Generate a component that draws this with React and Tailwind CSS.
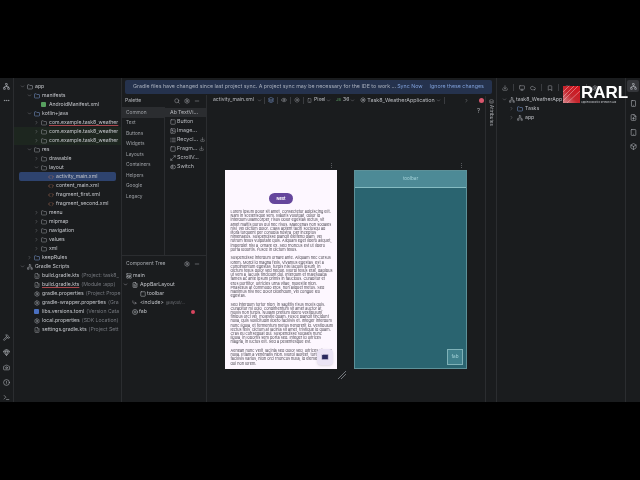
import {
  ChevronDown, ChevronRight, Folder, Search, Settings, Minus, Square, Image, List, Maximize2, ToggleLeft,
  Download, Hammer, Gem, Camera, CircleAlert, Terminal, Network, MoreHorizontal, Box, Eye, Layers,
  Smartphone, FileText, Mail, LayoutPanelTop, CirclePlus, CornerDownRight, RefreshCw, X, Cloud, Bookmark, Tablet,
  Monitor, FilePlus, FileCode, Code, Sun,
} from 'lucide-react';

const tree = [
  { d: 0, t: 'app', open: true, icon: 'box' },
  { d: 1, t: 'manifests', open: true, icon: 'blue' },
  { d: 2, t: 'AndroidManifest.xml', icon: 'manifest' },
  { d: 1, t: 'kotlin+java', open: true, icon: 'blue' },
  { d: 2, t: 'com.example.task8_weather', closed: true, icon: 'pkg', red: true },
  { d: 2, t: 'com.example.task8_weather', closed: true, icon: 'pkg', green: true },
  { d: 2, t: 'com.example.task8_weather', closed: true, icon: 'pkg', green: true },
  { d: 1, t: 'res', open: true, icon: 'pkg' },
  { d: 2, t: 'drawable', closed: true, icon: 'pkg' },
  { d: 2, t: 'layout', open: true, icon: 'pkg' },
  { d: 3, t: 'activity_main.xml', icon: 'xml', selected: true },
  { d: 3, t: 'content_main.xml', icon: 'xml' },
  { d: 3, t: 'fragment_first.xml', icon: 'xml' },
  { d: 3, t: 'fragment_second.xml', icon: 'xml' },
  { d: 2, t: 'menu', closed: true, icon: 'pkg' },
  { d: 2, t: 'mipmap', closed: true, icon: 'pkg' },
  { d: 2, t: 'navigation', closed: true, icon: 'pkg' },
  { d: 2, t: 'values', closed: true, icon: 'pkg' },
  { d: 2, t: 'xml', closed: true, icon: 'pkg' },
  { d: 1, t: 'keepRules', closed: true, icon: 'blue' },
  { d: 0, t: 'Gradle Scripts', open: true, icon: 'gradle' },
  { d: 1, t: 'build.gradle.kts', note: '(Project: task8_', icon: 'kts' },
  { d: 1, t: 'build.gradle.kts', note: '(Module :app)', icon: 'kts', red: true },
  { d: 1, t: 'gradle.properties', note: '(Project Prope', icon: 'gear' },
  { d: 1, t: 'gradle-wrapper.properties', note: '(Gra', icon: 'gear' },
  { d: 1, t: 'libs.versions.toml', note: '(Version Cata', icon: 'toml' },
  { d: 1, t: 'local.properties', note: '(SDK Location)', icon: 'gear' },
  { d: 1, t: 'settings.gradle.kts', note: '(Project Sett', icon: 'kts' },
];

function TreeIcon({ kind }) {
  if (kind === 'blue') return <Folder size={6} className="text-[#7f9fd8]" />;
  if (kind === 'pkg') return <Folder size={6} className="text-[#9a9da3]" />;
  if (kind === 'box') return <Folder size={6} className="text-[#a9adb5]" />;
  if (kind === 'manifest') return <span className="w-[5px] h-[5px] rounded-[1px] bg-[#57a05f]" />;
  if (kind === 'xml') return <Code size={6} className="text-[#c47a5c]" />;
  if (kind === 'gradle') return <Network size={6} className="text-[#9a9da3]" />;
  if (kind === 'kts') return <FileCode size={6} className="text-[#9a9da3]" />;
  if (kind === 'gear') return <Settings size={6} className="text-[#a5a8ae]" />;
  return <span className="w-[5px] h-[5px] rounded-[1px] bg-[#4a6fc0]" />;
}

function TreeRow({ row }) {
  const pad = { 0: 'pl-[5px]', 1: 'pl-[12px]', 2: 'pl-[19px]', 3: 'pl-[21px] ml-[5px] mr-[5px]' }[row.d];
  const bg = row.selected ? 'bg-[#2e436e] rounded-[2px]' : row.green ? 'bg-[#1d261f]' : '';
  return (
    <div className={`h-[9px] flex items-center whitespace-nowrap overflow-hidden ${pad} ${bg}`}>
      <span className="w-[7px] flex justify-center shrink-0 text-[#8c8f94]">
        {row.open && <ChevronDown size={5} />}
        {row.closed && <ChevronRight size={5} />}
      </span>
      <span className="w-[7px] flex justify-center shrink-0 mr-[2px]">
        <TreeIcon kind={row.icon} />
      </span>
      <span className={`text-[#c3c5ca] ${row.red ? 'underline decoration-[#a8484d]' : ''}`}>{row.t}</span>
      {row.note && <span className="ml-[2px] text-[#74777d]">{row.note}</span>}
    </div>
  );
}

const categories = ['Common', 'Text', 'Buttons', 'Widgets', 'Layouts', 'Containers', 'Helpers', 'Google', 'Legacy'];

const paletteItems = [
  { t: 'TextVi...', prefix: 'Ab', selected: true },
  { t: 'Button', Icon: Square },
  { t: 'Image...', Icon: Image },
  { t: 'Recycl...', Icon: List, dl: true },
  { t: 'Fragm...', Icon: Square, dl: true },
  { t: 'ScrollV...', Icon: Maximize2 },
  { t: 'Switch', Icon: ToggleLeft },
];

const lorem = [
  'Lorem ipsum dolor sit amet, consectetur adipiscing elit. Nam in scelerisque sem. Mauris volutpat, dolor id interdum ullamcorper, risus dolor egestas lectus, sit amet mattis purus dui nec risus. Maecenas non sodales nisi, vel dictum dolor. Class aptent taciti sociosqu ad litora torquent per conubia nostra, per inceptos himenaeos. Suspendisse blandit eleifend diam, vel rutrum tellus vulputate quis. Aliquam eget libero aliquet, imperdiet nisl a, ornare ex. Sed rhoncus est ut libero porta lobortis. Fusce in dictum tellus.',
  'Suspendisse interdum ornare ante. Aliquam nec cursus lorem. Morbi id magna felis. Vivamus egestas, est a condimentum egestas, turpis nisl iaculis ipsum, in dictum tellus dolor sed neque. Morbi tellus erat, dapibus ut sem a, iaculis tincidunt dui. Interdum et malesuada fames ac ante ipsum primis in faucibus. Curabitur et eros porttitor, ultricies urna vitae, molestie nibh. Phasellus at commodo eros, non aliquet metus. Sed maximus nisl nec dolor bibendum, vel congue leo egestas.',
  'Sed interdum tortor nibh, in sagittis risus mollis quis. Curabitur mi odio, condimentum sit amet auctor at, mollis non turpis. Nullam pretium libero vestibulum, finibus orci vel, molestie quam. Fusce blandit tincidunt nulla, quis sollicitudin libero facilisis et. Integer interdum nunc ligula, et fermentum metus hendrerit id. Vestibulum lectus felis, dictum at lacinia sit amet, tristique id quam. Cras eu consequat dui. Suspendisse sodales nunc ligula, in lobortis sem porta sed. Integer id ultrices magna, in luctus elit. Sed a pellentesque est.',
  'Aenean nunc velit, lacinia sed dolor sed, ultrices viverra nulla. Etiam a venenatis nibh. Morbi laoreet, tortor sed facilisis varius, nibh orci rhoncus nulla, id elementum leo dui non lorem.',
];

function Palette() {
  return (
    <div className="w-[85px] shrink-0 border-r border-[#2b2d30] flex flex-col text-[5px] text-[#b4b7bc]">
      <div className="h-[13px] flex items-center justify-between pl-[3px] pr-[6px] mt-[-1px]">
        <span>Palette</span>
        <span className="flex gap-[4px] text-[#a0a3a8]">
          <Search size={6} />
          <Settings size={6} />
          <Minus size={6} />
        </span>
      </div>
      <div className="h-[149px] flex border-b border-[#2b2d30]">
        <div className="w-[43px] border-r border-[#2b2d30] flex flex-col">
          {categories.map((c, i) => (
            <div key={c} className={`h-[10.5px] flex items-center pl-[3px] text-[4.8px] text-[#9ea1a6] ${i === 0 ? 'bg-[#2b2d30]' : ''}`}>
              <span className="pl-[1px]">{c}</span>
            </div>
          ))}
        </div>
        <div className="flex-1 flex flex-col pt-[1px] text-[5.3px] text-[#b7b9be]">
          {paletteItems.map(({ t, Icon, prefix, selected, dl }) => (
            <div key={t} className={`h-[9px] flex items-center gap-[1px] pl-[5px] whitespace-nowrap ${selected ? 'bg-[#2b2d30]' : ''}`}>
              {prefix && <span>{prefix}</span>}
              {Icon && <Icon size={6} className="text-[#a9abb0]" />}
              <span>{t}</span>
              {dl && <Download size={5} className="ml-[1px] text-[#a0a3a8]" />}
            </div>
          ))}
        </div>
      </div>
      <div className="h-[15px] flex items-center justify-between pl-[4px] pr-[6px] text-[5px] text-[#a4a7ac]">
        <span>Component Tree</span>
        <span className="flex gap-[4px]">
          <Settings size={6} />
          <Minus size={6} />
        </span>
      </div>
      <div className="flex flex-col text-[5.2px] text-[#bfc1c6]">
        <div className="h-[9px] flex items-center gap-[1px] pl-[4px]"><LayoutPanelTop size={6} />main</div>
        <div className="h-[9px] flex items-center pl-[1px]"><ChevronDown size={5} /><span className="w-[4px]" /><FileText size={6} /><span className="ml-[2px]">AppBarLayout</span></div>
        <div className="h-[9px] flex items-center gap-[1px] pl-[18px]"><Square size={6} />toolbar</div>
        <div className="h-[9px] flex items-center gap-[3px] pl-[10px]"><CornerDownRight size={5} />
          <span className="text-[5px]">&lt;include&gt;</span><span className="text-[3.8px] ml-[-1px] text-[#6b6e73]">@layout/...</span>
        </div>
        <div className="h-[9px] flex items-center gap-[1px] pl-[10px]">
          <CirclePlus size={6} />fab
          <span className="ml-[43px] w-[4px] h-[4px] rounded-full bg-[#d9455f]" />
        </div>
      </div>
    </div>
  );
}

function DesignToolbar() {
  return (
    <div className="h-[12px] flex items-center text-[5.1px] text-[#b9bbc0] whitespace-nowrap pl-[6px] mt-[-1px]">
      <span>activity_main.xml</span>
      <ChevronDown size={5} className="ml-[3px] text-[#8c8f94]" />
      <span className="w-px h-[7px] bg-[#3a3c40] ml-[2px]" />
      <Layers size={6} className="ml-[3px] text-[#7f9fd8]" />
      <span className="w-px h-[7px] bg-[#3a3c40] ml-[3px]" />
      <Eye size={6} className="ml-[3px] text-[#9a9da3]" />
      <span className="w-px h-[7px] bg-[#3a3c40] ml-[3px]" />
      <Sun size={6} className="ml-[3px] text-[#9a9da3]" />
      <span className="w-px h-[7px] bg-[#3a3c40] ml-[3px]" />
      <Smartphone size={5} className="ml-[3px] text-[#a0a3a8]" />
      <span className="ml-[2px]">Pixel</span>
      <ChevronDown size={5} className="ml-[1px] text-[#8c8f94]" />
      <span className="ml-[5px] text-[3.8px] text-[#5fa768]">JB</span>
      <span className="ml-[2px]">36</span>
      <ChevronDown size={5} className="ml-[1px] text-[#8c8f94]" />
      <Sun size={6} className="ml-[5px] text-[#c9cbd0]" />
      <span className="ml-[1px] text-[5.4px]">Task8_WeatherApplication</span>
      <ChevronDown size={5} className="ml-[1px] text-[#8c8f94]" />
      <span className="w-px h-[7px] bg-[#3a3c40] ml-[3px]" />
      <ChevronRight size={5} className="ml-[19px] text-[#a0a3a8]" />
      <span className="ml-[10px] w-[5px] h-[5px] rounded-full bg-[#d9566d]" />
    </div>
  );
}

function PhonePreview() {
  return (
    <div className="relative w-[112px] h-[199px] bg-[#fdf7ff] overflow-hidden shrink-0 flex flex-col items-center pt-[23px]">
      <div className="w-[24px] h-[11px] shrink-0 rounded-full bg-[#65469c] text-white text-[4px] font-bold flex items-center justify-center">Next</div>
      <div className="mt-[6px] w-[103px] ml-[2px] flex flex-col gap-[4.3px] text-[3.85px] leading-[4.2px] text-[#4a4650]">
        {lorem.map(p => <p key={p.slice(0, 12)}>{p}</p>)}
      </div>
      <div className="absolute right-[4px] bottom-[4px] w-[16px] h-[16px] rounded-[4px] bg-[#ebe4f5] shadow flex items-center justify-center">
        <Mail size={8} className="text-[#2a2a5e] fill-[#2a2a5e] stroke-[#ebe4f5]" />
      </div>
    </div>
  );
}

function BlueprintPreview() {
  return (
    <div className="w-[113px] h-[199px] bg-[#2a6470] border border-[#5d9199] shrink-0 flex flex-col">
      <div className="h-[17px] bg-[#4d8a96] border-b border-[#86bcc2] flex items-center justify-center text-[4.6px] text-[#a5d3d9]">toolbar</div>
      <div className="flex-1 flex items-end justify-end pr-[3px] pb-[3px]">
        <div className="w-[16px] h-[16px] bg-[#40808c] border border-[#7fb2b8] flex items-center justify-center text-[4.6px] text-[#a5d3d9]">fab</div>
      </div>
    </div>
  );
}

function Attributes() {
  return (
    <div className="w-[11px] shrink-0 border-l border-[#2b2d30] flex flex-col items-center pt-[3px] text-[#a9abb0]">
      <Layers size={5} />
      <span className="mt-[1px] text-[4.6px] [writing-mode:vertical-rl]">Attributes</span>
    </div>
  );
}

function GradlePanel() {
  return (
    <div className="w-[129px] shrink-0 border-l border-[#2b2d30] flex flex-col text-[5.2px] text-[#bcbec3]">
      <div className="h-[15px] mt-[2px] flex items-center gap-[5px] pl-[5px] text-[#a0a3a8]">
        <Download size={6} />
        <span className="w-px h-[7px] bg-[#3a3c40]" />
        <Monitor size={6} />
        <Cloud size={6} />
        <span className="w-px h-[7px] bg-[#3a3c40]" />
        <Bookmark size={6} />
        <span className="w-px h-[7px] bg-[#3a3c40]" />
        <RefreshCw size={6} />
        <X size={6} />
        <span className="w-px h-[7px] bg-[#3a3c40]" />
        <Settings size={6} />
      </div>
      <div className="h-[9px] flex items-center pl-[5px] whitespace-nowrap">
        <ChevronDown size={5} className="text-[#8c8f94]" />
        <Network size={6} className="ml-[2px] text-[#9a9da3]" />
        <span className="ml-[1px]">task8_WeatherApp</span>
      </div>
      <div className="h-[9px] flex items-center pl-[12px]">
        <ChevronRight size={5} className="text-[#8c8f94]" />
        <Folder size={6} className="ml-[3px] text-[#7f9fd8]" />
        <span className="ml-[2px]">Tasks</span>
      </div>
      <div className="h-[9px] flex items-center pl-[12px]">
        <ChevronRight size={5} className="text-[#8c8f94]" />
        <Network size={6} className="ml-[3px] text-[#9a9da3]" />
        <span className="ml-[2px]">app</span>
      </div>
    </div>
  );
}

function RarlLogo() {
  return (
    <div className="absolute left-[563px] top-[86px] flex items-start">
      <svg width="17" height="17" viewBox="0 0 17 17" className="shrink-0">
        <defs>
          <linearGradient id="rarl" x1="0" y1="1" x2="1" y2="0">
            <stop offset="0" stopColor="#d98a90" />
            <stop offset="0.45" stopColor="#c4262e" />
            <stop offset="1" stopColor="#d3121c" />
          </linearGradient>
        </defs>
        <rect width="17" height="17" fill="url(#rarl)" />
        <path d="M0 6 L6 0 M0 11 L11 0 M0 15 L15 0 M4 17 L17 5" stroke="#f0c0c3" strokeWidth="0.5" />
      </svg>
      <div className="flex flex-col ml-[1px] mt-[-2px]">
        <span className="text-[17px] leading-[17px] font-bold text-white font-['Liberation_Sans',sans-serif]">RARL</span>
        <span className="text-[2.4px] leading-[3px] text-[#c9cbd0] whitespace-nowrap">Applied Robotics Research Lab</span>
      </div>
    </div>
  );
}

export default function App() {
  return (
    <div className="relative w-[640px] h-[480px] bg-black overflow-hidden font-['Inter',sans-serif] blur-[0.4px]">
      <div className="h-[78px]" />
      <div className="h-[324px] flex bg-[#1a1c1e]">
        {/* left tool strip */}
        <div className="w-[14px] shrink-0 border-r border-[#2b2d30] flex flex-col items-center pt-[5px] text-[#b0b3b8]">
          <Network size={7} />
          <MoreHorizontal size={7} className="mt-[7px]" />
          <div className="mt-auto flex flex-col items-center gap-[8px] pb-[1px]">
            <Hammer size={7} />
            <Gem size={7} />
            <Camera size={7} />
            <CircleAlert size={7} />
            <Terminal size={7} />
          </div>
        </div>

        {/* project tree */}
        <div className="w-[108px] shrink-0 border-r border-[#2b2d30] pt-[4px] text-[5.15px] overflow-hidden">
          {tree.map((row, i) => <TreeRow key={i} row={row} />)}
        </div>

        {/* banner + designer */}
        <div className="w-[363px] shrink-0 flex flex-col">
          <div className="h-[14px] mt-[2px] ml-[3px] mr-[-7px] relative z-10 bg-[#25324d] rounded-[2px] flex items-center pl-[8px] text-[5.3px] text-[#a9b0bd] whitespace-nowrap">
            <span>Gradle files have changed since last project sync. A project sync may be necessary for the IDE to work ...</span>
            <span className="ml-[1px] text-[#7f9fd8]">Sync Now</span>
            <span className="ml-[7px] text-[#7f9fd8]">Ignore these changes</span>
          </div>
          <div className="flex-1 flex min-h-0 pt-[1px]">
            <Palette />
            <div className="flex-1 flex flex-col min-w-0">
              <DesignToolbar />
              <div className="flex justify-end pr-[5px] text-[6px] text-[#a0a3a8]">?</div>
              <div className="flex gap-[17px] pl-[18px] pt-[55px]">
                <div className="relative">
                  <span className="absolute right-[3px] top-[-7px] text-[5px] leading-[5px] text-[#8c8f94]">⋮</span>
                  <PhonePreview />
                </div>
                <div className="relative">
                  <span className="absolute right-[3px] top-[-7px] text-[5px] leading-[5px] text-[#8c8f94]">⋮</span>
                  <BlueprintPreview />
                </div>
              </div>
            </div>
          </div>
        </div>

        <div className="w-[11px] shrink-0 flex pt-[18px]"><Attributes /></div>
        <GradlePanel />

        {/* right tool strip */}
        <div className="flex-1 border-l border-[#2b2d30] flex flex-col items-center gap-[7px] pt-[2px] text-[#b0b3b8]">
          <div className="w-[12px] h-[12px] rounded-[2px] bg-[#34363a] flex items-center justify-center"><Network size={7} /></div>
          <Smartphone size={7} className="mt-[1px]" />
          <FilePlus size={7} />
          <Tablet size={7} className="mt-[1px]" />
          <Box size={7} />
        </div>
      </div>

      <RarlLogo />

      {/* mouse pointer from the recording */}
      <svg width="6" height="8" viewBox="0 0 6 8" className="absolute left-[450px] top-[80px]">
        <path d="M0 0 L0 7 L2 5.4 L3.4 8 L4.6 7.4 L3.3 5 L5.6 5 Z" fill="#fff" />
      </svg>

      {/* phone resize handle */}
      <svg width="8" height="8" viewBox="0 0 8 8" className="absolute left-[338px] top-[371px]">
        <path d="M0 8 L8 0 M3 8 L8 3" stroke="#9a9da3" strokeWidth="0.7" />
      </svg>
    </div>
  );
}
